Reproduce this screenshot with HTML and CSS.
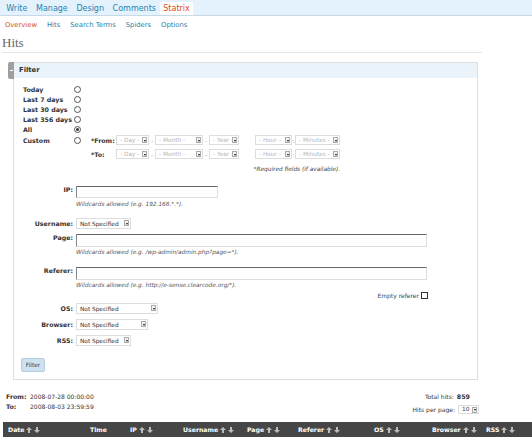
FILE: index.html
```html
<!DOCTYPE html>
<html>
<head>
<meta charset="utf-8">
<title>Statrix Hits</title>
<link rel="stylesheet" href="styles.css">
</head>
<body>
<div class="tabs">
  <a class="tab">Write</a><a class="tab">Manage</a><a class="tab">Design</a><a class="tab">Comments</a><a class="tab on">Statrix</a>
</div>
<div class="subtabs">
  <a class="on">Overview</a><a>Hits</a><a>Search Terms</a><a>Spiders</a><a>Options</a>
</div>
<div class="wrap">
  <h2 class="title">Hits</h2>
  <div class="box">
    <span class="handle"><span class="dash"></span></span>
    <div class="box-head">Filter</div>
    <div class="box-body">
      <div class="radios">
        <div class="rrow"><span class="rlabel">Today</span><span class="radio"></span></div>
        <div class="rrow"><span class="rlabel">Last 7 days</span><span class="radio"></span></div>
        <div class="rrow"><span class="rlabel">Last 30 days</span><span class="radio"></span></div>
        <div class="rrow"><span class="rlabel">Last 356 days</span><span class="radio"></span></div>
        <div class="rrow"><span class="rlabel">All</span><span class="radio checked"></span></div>
        <div class="rrow custom"><span class="rlabel">Custom</span><span class="radio"></span>
          <div class="range">
            <div class="drow">
              <span class="dlabel">*From:</span>
              <span class="sel ph w-day">- Day -<i class="arr"></i></span><span class="sep">-</span>
              <span class="sel ph w-month">- Month -<i class="arr"></i></span><span class="sep">-</span>
              <span class="sel ph w-year">- Year -<i class="arr"></i></span><span class="sep wide"></span>
              <span class="sel ph w-hour">- Hour -<i class="arr"></i></span><span class="sep narrow">:</span>
              <span class="sel ph w-min">- Minutes -<i class="arr"></i></span>
            </div>
            <div class="drow">
              <span class="dlabel">*To:</span>
              <span class="sel ph w-day">- Day -<i class="arr"></i></span><span class="sep">-</span>
              <span class="sel ph w-month">- Month -<i class="arr"></i></span><span class="sep">-</span>
              <span class="sel ph w-year">- Year -<i class="arr"></i></span><span class="sep wide"></span>
              <span class="sel ph w-hour">- Hour -<i class="arr"></i></span><span class="sep narrow">:</span>
              <span class="sel ph w-min">- Minutes -<i class="arr"></i></span>
            </div>
            <div class="req">*Required fields (if available).</div>
          </div>
        </div>
      </div>

      <div class="frow r-ip"><span class="flabel">IP:</span>
        <div class="fctl"><span class="input w-ip"></span><div class="hint">Wildcards allowed (e.g. 192.168.*.*).</div></div>
      </div>
      <div class="frow mid r-user"><span class="flabel">Username:</span>
        <div class="fctl"><span class="sel w-ns">Not Specified<i class="arr"></i></span></div>
      </div>
      <div class="frow r-page"><span class="flabel">Page:</span>
        <div class="fctl"><span class="input w-long"></span><div class="hint">Wildcards allowed (e.g. /wp-admin/admin.php?page=*).</div></div>
      </div>
      <div class="frow r-ref"><span class="flabel">Referer:</span>
        <div class="fctl"><span class="input w-long"></span><div class="hint">Wildcards allowed (e.g. http://e-sense.clearcode.org/*).</div>
          <div class="empty">Empty referer <span class="check"></span></div>
        </div>
      </div>
      <div class="frow mid r-os"><span class="flabel">OS:</span>
        <div class="fctl"><span class="sel w-os">Not Specified<i class="arr"></i></span></div>
      </div>
      <div class="frow mid r-br"><span class="flabel">Browser:</span>
        <div class="fctl"><span class="sel w-br">Not Specified<i class="arr"></i></span></div>
      </div>
      <div class="frow mid r-rss"><span class="flabel">RSS:</span>
        <div class="fctl"><span class="sel w-ns">Not Specified<i class="arr"></i></span></div>
      </div>
      <div class="btnrow"><span class="button">Filter</span></div>
    </div>
  </div>
</div>

<div class="summary">
  <div class="period">
    <div class="prow"><b>From:</b><span>2008-07-28 00:00:00</span></div>
    <div class="prow"><b>To:</b><span>2008-08-03 23:59:59</span></div>
  </div>
  <div class="totals">
    <div class="total">Total hits: <b>859</b></div>
    <div class="perpage">Hits per page: <span class="sel w-pp">10<i class="arr"></i></span></div>
  </div>
</div>

<div class="thead">
  <span class="th c-date">Date <i class="sort"><svg viewBox="0 0 14 6" width="14" height="6"><path d="M3 0 L6 3 L4 3 L4 6 L2 6 L2 3 L0 3 Z M11 6 L14 3 L12 3 L12 0 L10 0 L10 3 L8 3 Z"/></svg></i></span>
  <span class="th c-time">Time</span>
  <span class="th c-ip">IP <i class="sort"><svg viewBox="0 0 14 6" width="14" height="6"><path d="M3 0 L6 3 L4 3 L4 6 L2 6 L2 3 L0 3 Z M11 6 L14 3 L12 3 L12 0 L10 0 L10 3 L8 3 Z"/></svg></i></span>
  <span class="th c-user">Username <i class="sort"><svg viewBox="0 0 14 6" width="14" height="6"><path d="M3 0 L6 3 L4 3 L4 6 L2 6 L2 3 L0 3 Z M11 6 L14 3 L12 3 L12 0 L10 0 L10 3 L8 3 Z"/></svg></i></span>
  <span class="th c-page">Page <i class="sort"><svg viewBox="0 0 14 6" width="14" height="6"><path d="M3 0 L6 3 L4 3 L4 6 L2 6 L2 3 L0 3 Z M11 6 L14 3 L12 3 L12 0 L10 0 L10 3 L8 3 Z"/></svg></i></span>
  <span class="th c-ref">Referer <i class="sort"><svg viewBox="0 0 14 6" width="14" height="6"><path d="M3 0 L6 3 L4 3 L4 6 L2 6 L2 3 L0 3 Z M11 6 L14 3 L12 3 L12 0 L10 0 L10 3 L8 3 Z"/></svg></i></span>
  <span class="th c-os">OS <i class="sort"><svg viewBox="0 0 14 6" width="14" height="6"><path d="M3 0 L6 3 L4 3 L4 6 L2 6 L2 3 L0 3 Z M11 6 L14 3 L12 3 L12 0 L10 0 L10 3 L8 3 Z"/></svg></i></span>
  <span class="th c-br">Browser <i class="sort"><svg viewBox="0 0 14 6" width="14" height="6"><path d="M3 0 L6 3 L4 3 L4 6 L2 6 L2 3 L0 3 Z M11 6 L14 3 L12 3 L12 0 L10 0 L10 3 L8 3 Z"/></svg></i></span>
  <span class="th c-rss">RSS <i class="sort"><svg viewBox="0 0 14 6" width="14" height="6"><path d="M3 0 L6 3 L4 3 L4 6 L2 6 L2 3 L0 3 Z M11 6 L14 3 L12 3 L12 0 L10 0 L10 3 L8 3 Z"/></svg></i></span>
</div>
</body>
</html>
```

FILE: styles.css
```css
* { box-sizing: border-box; }
html { overflow: hidden; }
body {
  margin: 0;
  font-family: "DejaVu Sans", "Liberation Sans", sans-serif;
  color: #333;
  background: #fff;
}

/* top tabs */
.tabs {
  display: flex;
  align-items: flex-end;
  height: 16px;
  padding-left: 2px;
  background: #e4f2fd;
  border-bottom: 1px solid #c6d9e9;
}
.tab {
  font-size: 8px;
  line-height: 13px;
  height: 13px;
  padding: 0 4.3px;
  color: #2583ad;
  text-decoration: none;
}
.tab.on {
  background: #fff;
  color: #d54e21;
  margin-left: 0;
  padding: 0 3px;
}

/* sub tabs */
.subtabs {
  display: flex;
  gap: 10px;
  padding-left: 5px;
  margin-top: 4px;
  font-size: 6.8px;
  line-height: 10px;
}
.subtabs a { color: #2583ad; }
.subtabs a.on { color: #d54e21; }

.wrap { margin: 0 50px 0 2px; }
.title {
  margin: 6px 0 0;
  font-family: "Liberation Serif", "DejaVu Serif", serif;
  font-weight: normal;
  font-size: 13px;
  line-height: 14px;
  color: #666;
  padding-bottom: 2px;
  border-bottom: 1px solid #e5e5e5;
}

/* filter box */
.box {
  position: relative;
  margin: 9px 4px 0 11px;
  border: 1px solid #dfdfdf;
}
.handle {
  position: absolute;
  left: -6px;
  top: -1px;
  width: 6px;
  height: 17px;
  background: #9f9f9f;
  border-radius: 2px 0 0 2px;
  display: flex;
  align-items: center;
  justify-content: center;
}
.handle .dash { width: 3px; height: 1px; background: #fff; }
.box-head {
  height: 15px;
  line-height: 15px;
  padding-left: 5px;
  background: #eaf3fa;
  font-weight: bold;
  font-size: 6.8px;
  color: #333;
}
.box-body { padding: 6px 8px 7px 7px; font-size: 6px; }

/* radios */
.radios { display: flex; flex-direction: column; }
.rrow { display: flex; align-items: center; height: 10px; }
.rrow.custom { align-items: flex-start; height: auto; }
.rlabel {
  width: 53px;
  padding-left: 2px;
  font-weight: bold;
  font-size: 6.3px;
  color: #333;
}
.custom .rlabel, .custom .radio { margin-top: 2.5px; }
.radio {
  width: 7px;
  height: 7px;
  border: 1px solid #555;
  border-radius: 50%;
  background: #fff;
  display: flex;
  align-items: center;
  justify-content: center;
}
.radio.checked::after {
  content: "";
  width: 3px;
  height: 3px;
  border-radius: 50%;
  background: #333;
}
.range { margin-left: 10px; display: flex; flex-direction: column; gap: 2px; }
.drow { display: flex; align-items: center; height: 12px; }
.dlabel { width: 25px; font-weight: bold; font-size: 6.3px; }
.sep { width: 6px; text-align: center; color: #aaa; font-size: 6px; }
.sep.wide { width: 16px; }
.sep.narrow { width: 3px; }
.req {
  margin-top: 2px;
  text-align: right;
  font-style: italic;
  font-size: 5.8px;
  line-height: 10px;
  color: #444;
}

/* pseudo selects */
.sel {
  display: inline-flex;
  align-items: center;
  position: relative;
  height: 10px;
  padding-left: 3px;
  border: 1px solid #ddd;
  background: #fff;
  font-size: 5.8px;
  color: #333;
  white-space: nowrap;
  overflow: hidden;
}
.sel.ph { color: #b5b5b5; }
.arr {
  position: absolute;
  right: 1px;
  top: 1px;
  width: 5px;
  height: 6px;
  border: 1px solid #aaa;
  background: #f4f4f4;
}
.arr::after {
  content: "";
  position: absolute;
  left: 0.5px;
  top: 1.5px;
  border-left: 1.5px solid transparent;
  border-right: 1.5px solid transparent;
  border-top: 2px solid #111;
}
.w-day { width: 33px; }
.w-month { width: 48px; }
.w-year { width: 30px; }
.w-hour { width: 37px; }
.w-min { width: 45px; }
.w-ns { width: 55px; height: 11px; }
.w-os { width: 82px; height: 11px; }
.w-br { width: 72px; height: 11px; }
.w-pp { width: 21px; height: 9px; }

/* form rows */
.frow { display: flex; align-items: flex-start; }
.frow.mid { align-items: center; }
.flabel {
  width: 52px;
  margin-right: 3px;
  text-align: right;
  font-weight: bold;
  font-size: 6.3px;
  line-height: 8px;
  color: #333;
}
.fctl { display: flex; flex-direction: column; }
.input {
  display: block;
  height: 12px;
  border: 1px solid #ddd;
  border-top-color: #666;
  border-left-color: #888;
  background: #fff;
}
.w-ip { width: 142px; }
.w-long { width: 351px; height: 13px; }
.hint {
  margin-top: 2px;
  font-style: italic;
  font-size: 5.8px;
  line-height: 8px;
  color: #555;
}
.empty {
  display: flex;
  justify-content: flex-end;
  align-items: center;
  gap: 2px;
  height: 10px;
  margin-top: 1px;
  margin-right: -1px;
  font-size: 6px;
  color: #444;
}
.check { width: 7px; height: 7px; border: 1px solid #333; background: #fff; }

.r-ip { margin-top: 12px; }
.r-user { margin-top: 10px; }
.r-page { margin-top: 5px; }
.r-page .hint { margin-top: 1px; }
.r-ref { margin-top: 11px; }
.r-ref .hint { margin-top: 1px; }
.r-os { margin-top: 3px; }
.r-br { margin-top: 5px; }
.r-rss { margin-top: 5px; }
.btnrow { margin-top: 12px; }
.button {
  display: inline-block;
  width: 24px;
  height: 14px;
  line-height: 12px;
  text-align: center;
  font-size: 5.8px;
  color: #246;
  background: #cee1ef;
  border: 1px solid #b2cde0;
  border-radius: 2px;
}

/* summary */
.summary {
  display: flex;
  justify-content: space-between;
  margin: 11px 53px 0 6px;
  font-size: 6px;
  color: #333;
}
.prow { display: flex; height: 10px; align-items: center; }
.prow b { width: 24px; font-size: 6.3px; }
.totals { display: flex; flex-direction: column; align-items: flex-end; }
.total { height: 10px; display: flex; align-items: center; gap: 3px; margin-right: 9px; }
.total b { font-size: 6.3px; }
.perpage { margin-top: 2px; display: flex; align-items: center; gap: 3px; height: 12px; }

/* table header */
.thead {
  display: flex;
  align-items: center;
  height: 15px;
  margin: 7px 0 0 3px;
  padding-left: 5px;
  background: #464646;
  color: #fff;
  font-weight: bold;
  font-size: 6.2px;
}
.th { display: flex; align-items: center; gap: 2px; white-space: nowrap; }
.sort { display: inline-flex; }
.sort svg { fill: #bdbdbd; }
.c-date { width: 82px; }
.c-time { width: 40px; }
.c-ip { width: 53px; }
.c-user { width: 64px; }
.c-page { width: 51px; }
.c-ref { width: 76px; }
.c-os { width: 58px; }
.c-br { width: 54px; }
.c-rss { width: 40px; }
```
